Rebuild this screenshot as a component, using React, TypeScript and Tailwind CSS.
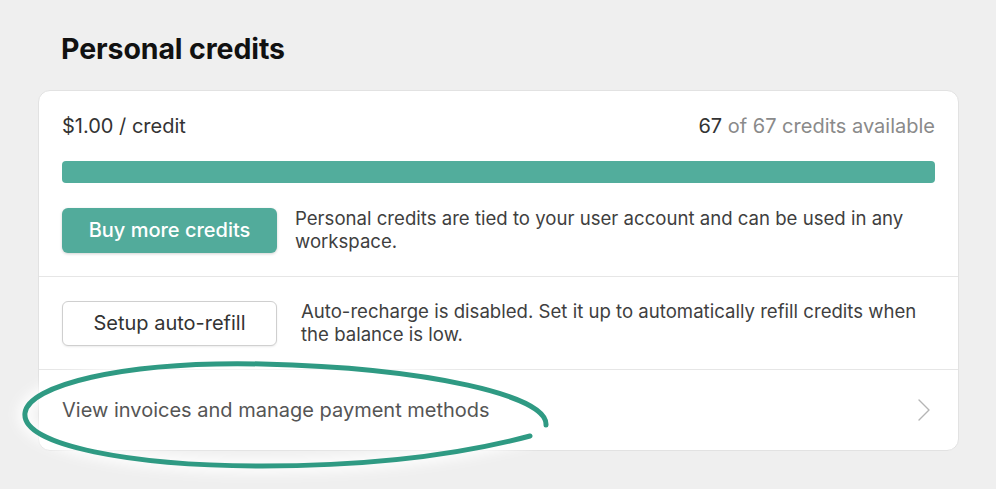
export default function App() {
  return (
    <div
      className="relative h-[489px] w-[996px] overflow-hidden bg-[#efefef]"
      style={{ fontFamily: 'Inter, "Liberation Sans", sans-serif' }}
    >
      <div className="px-[38px] pt-[31px]">
        <h1 className="mb-[24px] pl-[23px] text-[28.5px] font-bold leading-[35px] tracking-[-0.1px] text-[#111]">
          Personal credits
        </h1>

        <div className="w-[921px] rounded-[12px] border border-[#e2e2e2] bg-white">
          {/* Balance */}
          <div className="border-b border-[#e6e6e6] px-[23px] pb-[23px] pt-[22px]">
            <div className="flex items-center justify-between text-[20px] leading-[26px]">
              <span className="text-[#333]">$1.00 / credit</span>
              <span className="text-[#8a8a8a]">
                <span className="text-[#333]">67</span> of 67 credits available
              </span>
            </div>
            <div className="mt-[22px] h-[22px] rounded-[4px] bg-[#52ad9c]" />
            <div className="mt-[24px] flex items-center">
              <button className="h-[45px] w-[215px] shrink-0 rounded-[6px] bg-[#52ab9b] text-[20px] font-medium text-white shadow-[0_1px_3px_rgba(0,0,0,0.18)]">
                Buy more credits
              </button>
              <p className="ml-[18px] text-[18.6px] leading-[23px] text-[#3f3f3f]">
                Personal credits are tied to your user account and can be used in any workspace.
              </p>
            </div>
          </div>

          {/* Auto refill */}
          <div className="flex items-center border-b border-[#e6e6e6] px-[23px] py-[23px]">
            <button className="h-[45px] w-[215px] shrink-0 rounded-[6px] border border-[#cfcfcf] bg-white text-[20px] text-[#333] shadow-[0_1px_2px_rgba(0,0,0,0.08)]">
              Setup auto-refill
            </button>
            <p className="ml-[24px] pr-[14px] text-[18.6px] leading-[23px] text-[#3f3f3f]">
              Auto-recharge is disabled. Set it up to automatically refill credits when the balance is low.
            </p>
          </div>

          {/* Invoices */}
          <div className="flex h-[80px] items-center justify-between pl-[23px] pr-[28px]">
            <span className="text-[20px] text-[#555]">View invoices and manage payment methods</span>
            <svg width="12" height="22" viewBox="0 0 12 22" fill="none">
              <polyline points="1,1 11,11 1,21" stroke="#b5b5b5" strokeWidth="1.4" strokeLinecap="round" strokeLinejoin="round" />
            </svg>
          </div>
        </div>
      </div>

      {/* hand-drawn annotation */}
      <svg className="pointer-events-none absolute left-0 top-0" width="996" height="489" viewBox="0 0 996 489">
        <defs>
          <filter id="glow" x="-20%" y="-50%" width="140%" height="200%">
            <feGaussianBlur stdDeviation="6" />
          </filter>
        </defs>
        <path
          d="M 546 425 C 548 396, 430 368, 262 364 C 120 361, 28 386, 25 413 C 21 446, 135 466, 262 466 C 385 466, 470 452, 530 436"
          fill="none"
          stroke="rgba(255,255,255,0.9)"
          strokeWidth="14"
          filter="url(#glow)"
        />
        <path
          d="M 546 425 C 548 396, 430 368, 262 364 C 120 361, 28 386, 25 413 C 21 446, 135 466, 262 466 C 385 466, 470 452, 530 436"
          fill="none"
          stroke="#2f9a83"
          strokeWidth="5"
          strokeLinecap="round"
        />
      </svg>
    </div>
  );
}
